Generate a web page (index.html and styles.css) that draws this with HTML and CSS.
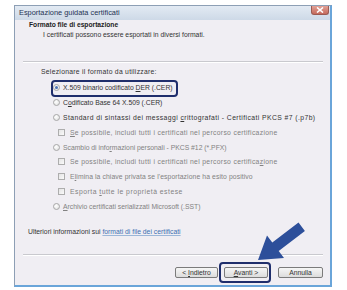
FILE: index.html
```html
<!DOCTYPE html>
<html lang="it">
<head>
<meta charset="utf-8">
<title>Esportazione guidata certificati</title>
<link rel="stylesheet" href="styles.css">
</head>
<body>
<div class="window">
  <div class="titlebar">
    <span class="title">Esportazione guidata certificati</span>
    <span class="close"><svg width="8" height="6" viewBox="0 0 8 6"><path d="M1 0.5 L7 5.5 M7 0.5 L1 5.5" stroke="#fff" stroke-width="1.6" fill="none"/></svg></span>
  </div>
  <div class="body">
    <div class="header">
      <div class="h-title">Formato file di esportazione</div>
      <div class="h-sub">I certificati possono essere esportati in diversi formati.</div>
    </div>
    <div class="sep"></div>
    <div class="prompt">Selezionare il formato da utilizzare:</div>
    <div class="options">
      <div class="row"><span class="radio on"></span><span>X.509 binario codificato <u>D</u>ER (.CER)</span></div>
      <div class="row"><span class="radio"></span><span>C<u>o</u>dificato Base 64 X.509 (.CER)</span></div>
      <div class="row"><span class="radio"></span><span class="sp-std">Standard di sintassi dei messaggi <u>c</u>rittografati - Certificati PKCS #7 (.p7b)</span></div>
      <div class="row sub dis"><span class="check"></span><span class="sp-inc"><u>S</u>e possibile, includi tutti i certificati nel percorso certificazione</span></div>
      <div class="row dis"><span class="radio"></span><span>Scambio di info<u>r</u>mazioni personali - PKCS #12 (*.PFX)</span></div>
      <div class="row sub dis"><span class="check"></span><span class="sp-inc">Se possibile, includi tutti i certificati nel percorso certifica<u>z</u>ione</span></div>
      <div class="row sub dis"><span class="check"></span><span class="sp-del">E<u>l</u>imina la chiave privata se l'esportazione ha esito positivo</span></div>
      <div class="row sub dis"><span class="check"></span><span class="sp-all">Esporta <u>t</u>utte le proprietà estese</span></div>
      <div class="row dis"><span class="radio"></span><span><u>A</u>rchivio certificati serializzati Microsoft (.SST)</span></div>
    </div>
    <div class="more">Ulteriori informazioni sui <a href="#">formati di file dei certificati</a></div>
    <div class="sep sep-bottom"></div>
    <div class="buttons">
      <span class="btn btn-back">&lt; <u>I</u>ndietro</span>
      <span class="btn btn-next"><u>A</u>vanti &gt;</span>
      <span class="btn btn-cancel">Annulla</span>
    </div>
  </div>
</div>
<div class="hl hl-opt"></div>
<div class="hl hl-next"></div>
<svg class="arrow" width="347" height="290" viewBox="0 0 347 290">
  <polygon points="258,260 267,235.5 272.3,242.5 298.5,222.5 304.9,231 278.7,251 284,258" fill="#2d4f9a"/>
</svg>
</body>
</html>
```
FILE: styles.css
```css
html, body {
  margin: 0;
  background: #fff;
}
body {
  padding: 5px 0 0 14px;
  font-family: "Liberation Sans", Arial, sans-serif;
  color: #333;
}
.window {
  width: 318px;
  height: 282px;
  box-sizing: border-box;
  border: 1px solid #8d9fb5;
  border-right: 2px solid #6aa5d9;
  border-bottom: 2px solid #6aa5d9;
  background: #f0eef3;
  display: flex;
  flex-direction: column;
}
.titlebar {
  height: 14px;
  flex: none;
  background: linear-gradient(#e2eaf3, #cdd9e7);
  display: flex;
  justify-content: space-between;
  align-items: flex-start;
}
.title {
  font-size: 7.4px;
  line-height: 14px;
  padding-left: 4px;
  color: #1f3253;
}
.close {
  width: 18px;
  height: 9px;
  margin-right: 1px;
  box-sizing: border-box;
  border: 1px solid #9a5a52;
  border-top: none;
  border-radius: 0 0 3px 3px;
  background: linear-gradient(#e2a196, #c56a5c);
  display: flex;
  align-items: center;
  justify-content: center;
}
.body {
  flex: 1;
  display: flex;
  flex-direction: column;
}
.header {
  height: 41px;
  box-sizing: border-box;
  padding: 1px 0 0 14px;
}
.h-title {
  font-size: 6.7px;
  font-weight: bold;
  line-height: 8px;
  color: #222;
}
.h-sub {
  font-size: 6.8px;
  line-height: 8px;
  margin-top: 2px;
  padding-left: 14px;
  color: #333;
}
.sep {
  height: 0;
  border-top: 1px solid #c9c9ce;
  border-bottom: 1px solid #fff;
  margin: 0 7px 0 8px;
}
.prompt {
  font-size: 6.8px;
  line-height: 8px;
  margin-top: 5px;
  padding-left: 26px;
  letter-spacing: 0.27px;
}
.options {
  margin-top: 4.6px;
  padding-left: 38px;
}
.row {
  height: 14.8px;
  display: flex;
  align-items: center;
  font-size: 6.8px;
  white-space: nowrap;
  color: #333;
}
.row.dis {
  color: #828282;
}
.row.sub {
  padding-left: 5px;
}
.sp-std { letter-spacing: 0.42px; }
.sp-inc { letter-spacing: 0.32px; }
.sp-del { letter-spacing: 0.1px; }
.sp-all { letter-spacing: 0.5px; }
.radio {
  width: 7px;
  height: 7px;
  box-sizing: border-box;
  border-radius: 50%;
  border: 1px solid #a7a7a7;
  background: radial-gradient(circle at 40% 35%, #fff, #dedede);
  margin-right: 3px;
  flex: none;
  display: flex;
  align-items: center;
  justify-content: center;
}
.radio.on::after {
  content: "";
  width: 3px;
  height: 3px;
  border-radius: 50%;
  background: #4a72b4;
}
.check {
  width: 7px;
  height: 7px;
  box-sizing: border-box;
  border: 1px solid #adadad;
  background: linear-gradient(135deg, #e4e4e4, #fafafa);
  margin-right: 5px;
  flex: none;
}
.more {
  font-size: 6.8px;
  line-height: 8px;
  margin-top: 14.2px;
  padding-left: 13px;
}
.more a {
  color: #3d6fb2;
  text-decoration: underline;
  text-decoration-color: #9bb6d8;
}
.sep-bottom {
  margin-top: 18px;
}
.buttons {
  margin-top: 11px;
  display: flex;
  justify-content: flex-end;
  padding-right: 7px;
}
.btn {
  height: 11px;
  box-sizing: border-box;
  border: 1px solid #7b7b7b;
  border-radius: 2px;
  background: linear-gradient(#f6f6f6, #dcdcdc);
  font-size: 6.8px;
  line-height: 9px;
  text-align: center;
  color: #333;
}
.btn-back { width: 43px; }
.btn-next { width: 44px; margin-left: 6px; }
.btn-cancel { width: 45px; margin-left: 10px; }
.hl {
  position: absolute;
  box-sizing: border-box;
  border: 2px solid #1f2e6c;
  border-radius: 4px;
}
.hl-opt {
  left: 51px;
  top: 80px;
  width: 127px;
  height: 17px;
}
.hl-next {
  left: 219px;
  top: 262px;
  width: 52px;
  height: 21px;
}
.arrow {
  position: absolute;
  left: 0;
  top: 0;
}
```
